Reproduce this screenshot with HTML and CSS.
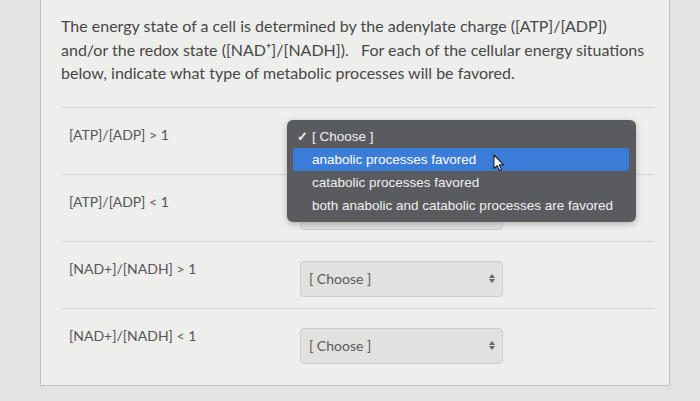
FILE: index.html
```html
<!DOCTYPE html>
<html lang="en">
<head>
<meta charset="utf-8">
<title>Matching question</title>
<link rel="stylesheet" href="styles.css">
</head>
<body>
<div class="panel">
  <p class="question">The energy state of a cell is determined by the adenylate charge ([ATP]/[ADP]) and/or the redox state ([NAD⁺]/[NADH]).&nbsp;&nbsp; For each of the cellular energy situations below, indicate what type of metabolic processes will be favored.</p>
  <div class="rows">
    <div class="row">
      <div class="label">[ATP]/[ADP] &gt; 1</div>
      <div class="select"><span>[ Choose ]</span><span class="arrows"><i class="up"></i><i class="down"></i></span></div>
    </div>
    <div class="row">
      <div class="label">[ATP]/[ADP] &lt; 1</div>
      <div class="select"><span>[ Choose ]</span><span class="arrows"><i class="up"></i><i class="down"></i></span></div>
    </div>
    <div class="row">
      <div class="label">[NAD+]/[NADH] &gt; 1</div>
      <div class="select"><span>[ Choose ]</span><span class="arrows"><i class="up"></i><i class="down"></i></span></div>
    </div>
    <div class="row">
      <div class="label">[NAD+]/[NADH] &lt; 1</div>
      <div class="select"><span>[ Choose ]</span><span class="arrows"><i class="up"></i><i class="down"></i></span></div>
    </div>
  </div>

  <ul class="menu">
    <li class="item checked"><span class="check">&#10003;</span>[ Choose ]</li>
    <li class="item active">anabolic processes favored</li>
    <li class="item">catabolic processes favored</li>
    <li class="item">both anabolic and catabolic processes are favored</li>
  </ul>

  <svg class="cursor" width="12" height="18" viewBox="0 0 12 18">
    <path d="M1 1 L1 14.5 L4.2 11.6 L6.4 16.6 L8.4 15.7 L6.3 10.9 L10.6 10.9 Z" fill="#fff" stroke="#222" stroke-width="1.1" stroke-linejoin="round"/>
  </svg>
</div>
</body>
</html>
```

FILE: styles.css
```css
html, body {
  margin: 0;
  padding: 0;
  background: #e3e3e1;
  height: 100%;
  overflow: hidden;
}

body {
  padding-left: 40px;
  font-family: Lato, "Open Sans", sans-serif;
}

.panel {
  position: relative;
  width: 628px;
  background: #eeeeed;
  border: 1px solid #c4c4c3;
  border-top: none;
  padding-bottom: 10px;
}

.question {
  margin: 0 0 22px 0;
  padding: 14px 20px 0 20px;
  font-size: 16px;
  line-height: 23.5px;
  color: #474747;
}

.rows {
  margin: 0 14px 0 21px;
}

.row {
  display: flex;
  align-items: flex-start;
  height: 67px;
  box-sizing: border-box;
  border-top: 1px solid #d3d3d2;
  padding-top: 19px;
}

.row .label {
  width: 231px;
  padding-left: 7px;
  font-size: 14px;
  line-height: 16px;
  color: #555;
}

.select {
  width: 203px;
  height: 36px;
  box-sizing: border-box;
  border: 1px solid #cbcbca;
  border-radius: 4px;
  background: #e1e1e0;
  display: flex;
  align-items: center;
  justify-content: space-between;
  padding: 0 7px 0 8px;
  font-size: 14px;
  color: #5a5a5a;
}

.arrows {
  display: flex;
  flex-direction: column;
  gap: 1px;
}

.arrows i {
  display: block;
  width: 0;
  height: 0;
  border-left: 3px solid transparent;
  border-right: 3px solid transparent;
}

.arrows .up {
  border-bottom: 4px solid #666;
}

.arrows .down {
  border-top: 4px solid #666;
}

.menu {
  position: absolute;
  left: 246px;
  top: 120px;
  width: 349px;
  box-sizing: border-box;
  margin: 0;
  padding: 5px 7px 5px 6px;
  list-style: none;
  background: #5a5b5f;
  border-radius: 6px;
  box-shadow: 0 2px 6px rgba(0, 0, 0, 0.25);
  font-family: "Liberation Sans", Arial, sans-serif;
  font-size: 13.5px;
  color: #f1f1f1;
}

.item {
  height: 23px;
  line-height: 23px;
  padding-left: 19px;
  position: relative;
  border-radius: 3px;
  white-space: nowrap;
}

.item.active {
  background: #3b7cd8;
  color: #fff;
}

.check {
  position: absolute;
  left: 4px;
  top: 0;
  font-size: 13px;
  font-weight: bold;
}

.cursor {
  position: absolute;
  left: 452px;
  top: 154px;
}
```
